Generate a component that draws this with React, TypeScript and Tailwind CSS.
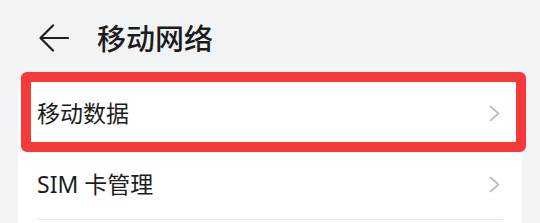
export default function App() {
  const font = { fontFamily: '"Noto Sans", "Noto Sans CJK SC", sans-serif' };
  const rows = ["移动数据", "SIM 卡管理"];

  return (
    <div className="relative w-[540px] h-[223px] overflow-hidden bg-[#f1f3f5]" style={font}>
      {/* 顶部标题栏 */}
      <header className="flex items-center h-[76px] pl-[39px]">
        <svg width="30" height="28" viewBox="0 0 30 28" fill="none" className="shrink-0">
          <path d="M29 14H1.5M14 1.5L1.5 14L14 26.5" stroke="#1f1f1f" strokeWidth="2.2" strokeLinecap="round" strokeLinejoin="round" />
        </svg>
        <h1 className="ml-[28px] text-[29px] leading-none font-medium text-[#1c1c1c]">移动网络</h1>
      </header>

      {/* 列表卡片 */}
      <div className="mx-[18px] mt-[2px] pb-6 bg-white rounded-t-2xl">
        {rows.map((r) => (
          <div key={r} className="mx-[19px] h-[71px] flex items-center justify-between border-b border-[#e6e7e9]">
            <span className="text-[23px] text-[#1c1c1c]">{r}</span>
            <svg width="11" height="17" viewBox="0 0 11 17" fill="none" className="mr-[3px]">
              <path d="M1.5 1.5L9.5 8.5L1.5 15.5" stroke="#bdbdbd" strokeWidth="1.8" strokeLinecap="round" strokeLinejoin="round" />
            </svg>
          </div>
        ))}
      </div>

      {/* 红色标注框 */}
      <div className="absolute left-[21px] top-[72px] w-[505px] h-[80px] border-[10px] border-[#f53a3a] rounded-md" />
    </div>
  );
}
